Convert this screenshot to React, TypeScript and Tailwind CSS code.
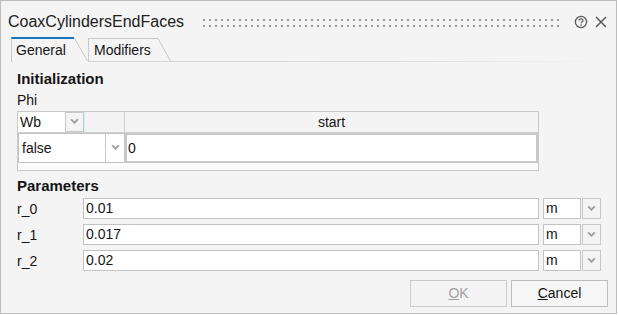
import React from "react";

function Chevron() {
  return (
    <svg width="9" height="6" viewBox="0 0 9 6" className="block">
      <path d="M0.8 0.8 L4.5 4.8 L8.2 0.8 L6.9 0.3 L4.5 2.9 L2.1 0.3 Z" fill="#999999" stroke="#999999" strokeWidth="0.6" strokeLinejoin="round" />
    </svg>
  );
}

function ParamRow({ label, value }: { label: string; value: string }) {
  return (
    <div className="flex items-center h-[21px]">
      <div className="w-[66px] pl-0 leading-none">{label}</div>
      <div className="w-[456px] h-full bg-white border border-[#c3c3c3] flex items-center pl-[2px]">{value}</div>
      <div className="ml-[4px] w-[38px] h-full bg-white border border-[#c3c3c3] flex items-center pl-[2px]">m</div>
      <div className="ml-px w-[19px] h-full border border-[#c8c8c8] bg-[#f4f4f4] flex items-center justify-center">
        <Chevron />
      </div>
    </div>
  );
}

export default function App() {
  return (
    <div className="w-[618px] h-[315px] bg-white">
      <div className="w-[617px] h-[314px] border border-[#bdbdbd] bg-[#f4f4f4] flex flex-col font-['Liberation_Sans',Arial,sans-serif] text-[14px] text-[#141414]">
        {/* Title bar */}
        <div className="h-[36px] flex items-center pt-[6px] pl-[7px] pr-[9px]">
          <span className="text-[16px] text-[#202020] leading-none">CoaxCylindersEndFaces</span>
          <svg className="ml-[18px] flex-1 h-[9px]" preserveAspectRatio="none">
            <defs>
              <pattern id="grip" x="0" y="0" width="6" height="6" patternUnits="userSpaceOnUse">
                <rect x="1" y="1" width="2" height="2" fill="#9a9a9a" />
              </pattern>
            </defs>
            <rect x="0" y="0" width="100%" height="9" fill="url(#grip)" />
          </svg>
          <svg width="14" height="14" viewBox="0 0 14 14" className="ml-[11px]">
            <circle cx="7" cy="7" r="5.6" fill="none" stroke="#5a5a5a" strokeWidth="1.3" />
            <path d="M5 5.6 C5 3.4 9 3.4 9 5.5 C9 6.9 7 6.8 7 8.3" fill="none" stroke="#5a5a5a" strokeWidth="1.2" />
            <rect x="6.4" y="9.3" width="1.3" height="1.3" fill="#5a5a5a" />
          </svg>
          <svg width="12" height="12" viewBox="0 0 12 12" className="ml-[7px]">
            <path d="M1 1 L11 11 M11 1 L1 11" stroke="#5a5a5a" strokeWidth="1.5" />
          </svg>
        </div>

        {/* Tabs */}
        <div className="h-[25px] flex pl-[10px]">
          <div className="flex h-full">
            <div className="h-full border-l border-[#c8c8c8] border-t-2 border-t-[#1877bb] pl-[4px] pr-[4px] flex items-center w-[63px]">
              General
            </div>
            <svg width="14" height="25" className="block">
              <line x1="0" y1="0.5" x2="13.5" y2="24" stroke="#c8c8c8" strokeWidth="1" />
            </svg>
          </div>
          <div className="flex h-full pt-px">
            <div className="flex h-full border-b border-[#d4d4d4]">
              <div className="h-full border-l border-t border-[#c8c8c8] pl-[5px] pr-[6px] flex items-center w-[70px]">
                Modifiers
              </div>
              <svg width="13" height="24" className="block">
                <line x1="0" y1="0.5" x2="12.5" y2="23" stroke="#c8c8c8" strokeWidth="1" />
              </svg>
            </div>
          </div>
          <div className="flex-1 flex flex-col justify-end pr-[14px]">
            <div className="h-px bg-gradient-to-r from-[#d4d4d4] via-[#dcdcdc] to-[#f4f4f4]" />
          </div>
        </div>

        {/* Content */}
        <div className="flex flex-col pl-[16px] pt-[8px]">
          <div className="font-bold text-[15px] leading-[17px]">Initialization</div>
          <div className="mt-[5px] leading-[16px]">Phi</div>

          {/* Table */}
          <div className="mt-[3px] w-[522px] h-[60px] border border-[#c8c8c8] bg-[#f4f4f4] flex flex-col">
            <div className="h-[21px] flex border-b border-[#d0d0d0]">
              <div className="w-[107px] flex border-r border-[#cfcfcf]">
                <div className="w-[47px] bg-white flex items-center pl-[2px]">Wb</div>
                <div className="w-[19px] border border-[#c8c8c8] bg-[#f4f4f4] flex items-center justify-center">
                  <Chevron />
                </div>
                <div className="w-px bg-[#c9f0f7]" />
              </div>
              <div className="flex-1 flex items-center justify-center">start</div>
            </div>
            <div className="h-[30px] flex">
              <div className="w-[107px] flex border border-[#c3c3c3] bg-white">
                <div className="w-[86px] flex items-center pl-[3px]">false</div>
                <div className="flex-1 border-l border-[#c8c8c8] flex items-center justify-center">
                  <Chevron />
                </div>
              </div>
              <div className="flex-1 border-2 border-[#c8c8c8] bg-white flex items-center pl-[1px]">0</div>
            </div>
            <div className="flex-1 bg-[#fbfbfb]" />
          </div>

          <div className="mt-[6px] font-bold text-[15px] leading-[17px]">Parameters</div>

          <div className="mt-[4px] flex flex-col gap-[5px]">
            <ParamRow label="r_0" value="0.01" />
            <ParamRow label="r_1" value="0.017" />
            <ParamRow label="r_2" value="0.02" />
          </div>
        </div>

        {/* Buttons */}
        <div className="mt-[9px] flex justify-end gap-[4px] pr-[8px]">
          <div className="w-[97px] h-[27px] border border-[#cbcbcb] bg-[#f4f4f4] flex items-center justify-center text-[#a2a2a2]">
            <span><span className="underline">O</span>K</span>
          </div>
          <div className="w-[97px] h-[27px] border border-[#bdbdbd] bg-[#f6f6f6] flex items-center justify-center">
            <span><span className="underline">C</span>ancel</span>
          </div>
        </div>
      </div>
    </div>
  );
}
